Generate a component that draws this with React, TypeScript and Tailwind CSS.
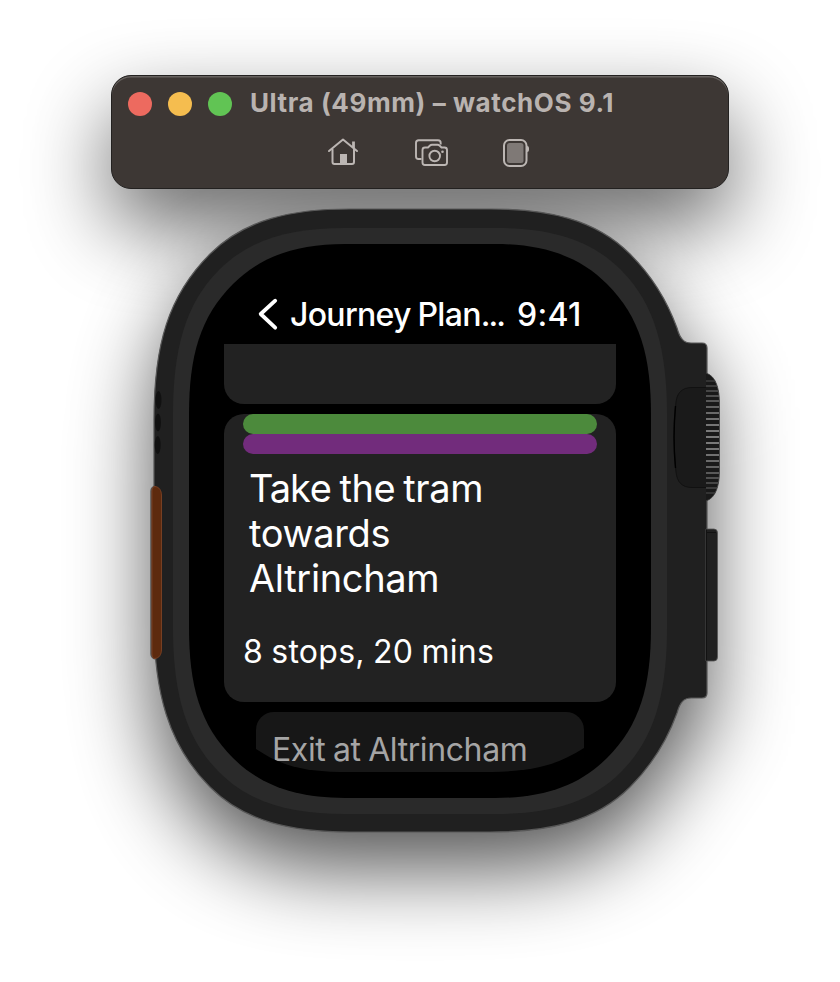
import React from "react";

const BODY =
  "M350 209 H490 C548 209 595 219 630 254 C655 279 669 306 677 328 C680 339 684 343 691 343 H702 Q707 343 707 348 V693 Q707 698 702 698 H691 C684 698 680 702 677 713 C669 735 655 762 630 787 C595 822 548 832 490 832 H350 C292 832 245 822 210 787 C168 745 154 691 154 621 V420 C154 345 168 296 210 254 C245 219 292 209 350 209 Z";
const RING =
  "M345 228 H495 C550 228 590 239 621 270 C655 304 667 350 667 415 V627 C667 692 655 738 621 772 C590 803 550 814 495 814 H345 C290 814 250 803 219 772 C185 738 173 692 173 627 V415 C173 350 185 304 219 270 C250 239 290 228 345 228 Z";
const GLASS =
  "M345 244 H495 C545 244 580 257 607 284 C640 317 651 356 651 415 V627 C651 686 640 725 607 758 C580 785 545 798 495 798 H345 C295 798 260 785 233 758 C200 725 189 686 189 627 V415 C189 356 200 317 233 284 C260 257 295 244 345 244 Z";

const ridges = Array.from({ length: 21 }, (_, i) => {
  const k = i - 10;
  const angle = (k / 10.5) * 1.2;
  return {
    y: 436 + (Math.abs(k) <= 6 ? k * 6 : Math.sign(k) * (36 + (Math.abs(k) - 6) * 5)),
    shade: Math.round(34 + 88 * Math.pow(Math.cos(angle), 1.8)),
  };
});

function WatchCase() {
  return (
    <svg className="absolute left-0 top-[-209px]" width="840" height="982" viewBox="0 0 840 982" fill="none">
      <defs>
        <clipPath id="crown">
          <path d="M706 373 C716 376 719.500 389 719.500 404 V470 C719.500 485 716 498 706 501 Z" />
        </clipPath>
      </defs>
      <rect x="151" y="486" width="12" height="173" rx="5" fill="#5d2a0e" stroke="#555" strokeWidth="1.5" />
      <path d={BODY} fill="#202020" stroke="#585858" strokeWidth="1.2" />
      <path d="M706 529 H714 Q717.500 529 717.500 533 V657 Q717.500 661 714 661 H706 Z" fill="#202020" stroke="#555" strokeWidth="0.8" />
      <path d="M706.500 529.500 V660.500 M707 532.500 H716" stroke="#121212" strokeWidth="1" />
      <g clipPath="url(#crown)">
        <rect x="706" y="372" width="15" height="130" fill="#191919" />
        {ridges.map((r) => (
          <rect key={r.y} x="706" y={r.y} width="13" height="2" fill={`rgb(${r.shade},${r.shade},${r.shade})`} />
        ))}
      </g>
      <path d="M706 373 C716 376 719.500 389 719.500 404 V470 C719.500 485 716 498 706 501" stroke="#444" strokeWidth="0.8" />
      <path d="M706 387.500 H692 C682 387.500 677 393 676 402 C673.500 425 673.500 449 676 472 C677 482 682 487.500 692 487.500 H706 Z" fill="#1a1a1a" />
      <path d="M706 387.500 H692 C682 387.500 677 393 676 402 C673.500 425 673.500 449 676 472 C677 482 682 487.500 692 487.500 H706" stroke="#111" strokeWidth="1" />
      <path d="M675.500 406 C673.500 427 673.500 447 675.500 468" stroke="#000" strokeWidth="1.4" />
      <path d={RING} fill="#2a2a2a" />
      <path d={GLASS} fill="#000" />
      <ellipse cx="158.500" cy="400" rx="3" ry="9" fill="#111" />
      <ellipse cx="158" cy="422.500" rx="3" ry="9" fill="#111" />
      <ellipse cx="157.700" cy="445" rx="3" ry="9" fill="#111" />
      <path d="M152 491 Q152 486.500 155 486.500 C159 487 161.500 490 161.500 496 V649 C161.500 655 159 658 155 658.500 Q152 658.500 152 654 Z" fill="#5d2a0e" stroke="#783f22" strokeWidth="1" />
    </svg>
  );
}

function Toolbar() {
  return (
    <header className="relative flex h-[114px] w-[618px] shrink-0 flex-col rounded-[20px] border border-[#232120] bg-[#3d3734] shadow-[inset_0_1.5px_0_#67625f]">
      <div className="flex h-[56px] items-center pl-[16px]">
        <div className="flex gap-4">
          <span className="size-6 rounded-full bg-[#ed6a5f]" />
          <span className="size-6 rounded-full bg-[#f5bd4f]" />
          <span className="size-6 rounded-full bg-[#61c454]" />
        </div>
        <h1 className="mb-[2px] ml-[18px] whitespace-nowrap text-[26px] font-bold leading-8 tracking-[0.58px] text-[#b9b3b0]">Ultra (49mm) – watchOS 9.1</h1>
      </div>
      <div className="flex pl-[215px] text-[#bcb6b3]">
        <svg width="34" height="40" viewBox="327 132 34 40" fill="none" stroke="currentColor" strokeWidth="2" strokeLinecap="round" strokeLinejoin="round">
          <path d="M329 151 L343 139.500 L357 151" />
          <path d="M332.500 149.500 V162 Q332.500 164 334.500 164 H352 Q354 164 354 162 V149.500" />
          <path d="M353.500 148 V141.500" strokeWidth="2.800" strokeLinecap="butt" />
          <path d="M340 164 V154 H347 V164 Z" fill="currentColor" stroke="none" />
        </svg>
        <svg className="ml-[52px]" width="36" height="40" viewBox="413 132 36 40" fill="none" stroke="currentColor" strokeWidth="1.900" strokeLinejoin="round">
          <path d="M421.500 159 H418.500 Q416 159 416 156.500 V143 Q416 140.300 418.700 140.300 H438 Q440.700 140.300 440.700 143 V144.500" />
          <path d="M425 147.500 H428 L430 145.500 Q430.800 144.700 432 144.700 H437.500 Q438.700 144.700 439.500 145.500 L441.500 147.500 H444.500 Q447 147.500 447 150 V162.500 Q447 165 444.500 165 H425 Q422.500 165 422.500 162.500 V150 Q422.500 147.500 425 147.500 Z" />
          <circle cx="434.700" cy="156" r="5.300" />
          <circle cx="442.500" cy="151.700" r="1.300" fill="currentColor" stroke="none" />
        </svg>
        <svg className="ml-[52px]" width="32" height="40" viewBox="501 132 32 40" fill="none">
          <rect x="504" y="140" width="22.500" height="26" rx="5.500" stroke="currentColor" strokeWidth="2" />
          <rect x="507" y="143" width="16.500" height="20" rx="2.500" fill="#7f7976" />
          <path d="M527 146 Q529 146 529 148 V150 Q529 152 527 152 Z" fill="currentColor" />
        </svg>
      </div>
    </header>
  );
}

export default function App() {
  return (
    <main className="relative flex h-[982px] w-[840px] flex-col items-center overflow-hidden bg-white pt-[75px] font-['Inter','Liberation_Sans',sans-serif]">
      <svg className="absolute inset-0" width="840" height="982" viewBox="0 0 840 982">
        <defs>
          <filter id="shade" x="-200" y="-200" width="1240" height="1400" filterUnits="userSpaceOnUse">
            <feGaussianBlur stdDeviation="42" />
          </filter>
        </defs>
        <rect x="111" y="111" width="618" height="114" rx="20" fill="#000" opacity="0.600" filter="url(#shade)" />
        <path d={BODY} transform="translate(0 36)" fill="#000" opacity="0.680" filter="url(#shade)" />
      </svg>
      <Toolbar />
      <section className="relative mt-5 h-[624px] w-[840px]">
        <WatchCase />
        <div className="relative mx-auto flex w-[392px] flex-col pt-[86px] text-white">
          <div className="flex h-[49px] items-start pl-[34px]">
            <svg className="mt-[2px]" width="20" height="34" viewBox="0 0 20 34" fill="none" stroke="#fff" strokeWidth="3.800" strokeLinecap="round" strokeLinejoin="round">
              <path d="M17.200 3.700 L2.700 17 L17.200 30.700" />
            </svg>
            <h2 className="ml-[12px] w-[227px] whitespace-nowrap text-[32px] font-medium leading-10 tracking-[-0.7px] [word-spacing:-1px]">Journey Plan<span className="tracking-[-2px]">...</span></h2>
            <time className="whitespace-nowrap text-[32px] font-medium leading-10 tracking-[0.3px]">9:41</time>
          </div>
          <div className="h-[60px] rounded-b-[20px] bg-[#222]" />
          <article className="mt-[10px] h-[288px] rounded-[20px] bg-[#222]">
            <div className="mx-[19px] h-5 rounded-[10px] bg-[#4c8a3c]" />
            <div className="mx-[19px] h-5 rounded-[10px] bg-[#722c7c]" />
            <p className="ml-[25px] mt-[12px] w-[300px] text-[38px] leading-[45px] tracking-[-0.35px]">
              <span className="[word-spacing:-2.500px]"><span className="tracking-[-1px]">Ta</span>ke the tram</span><br />towards<br />Altrincham
            </p>
            <p className="ml-[19px] mt-[31px] text-[32px] leading-10 tracking-[0.25px] [word-spacing:-1px]">8 stops, 20 mins</p>
          </article>
          <div className="mx-8 mt-[10px] h-[60px] rounded-t-[18px] bg-[#171717] pl-4 pt-[18px] text-[#a5a5a5] [clip-path:path('M0_0_H328_V36_C300_54_276_59_236_60_H84_C44_59_24_53_0_37_Z')]">
            <p className="whitespace-nowrap text-[32px] leading-10 tracking-[-0.4px] [word-spacing:-1px]">Exit at Altrincham</p>
          </div>
        </div>
      </section>
    </main>
  );
}
